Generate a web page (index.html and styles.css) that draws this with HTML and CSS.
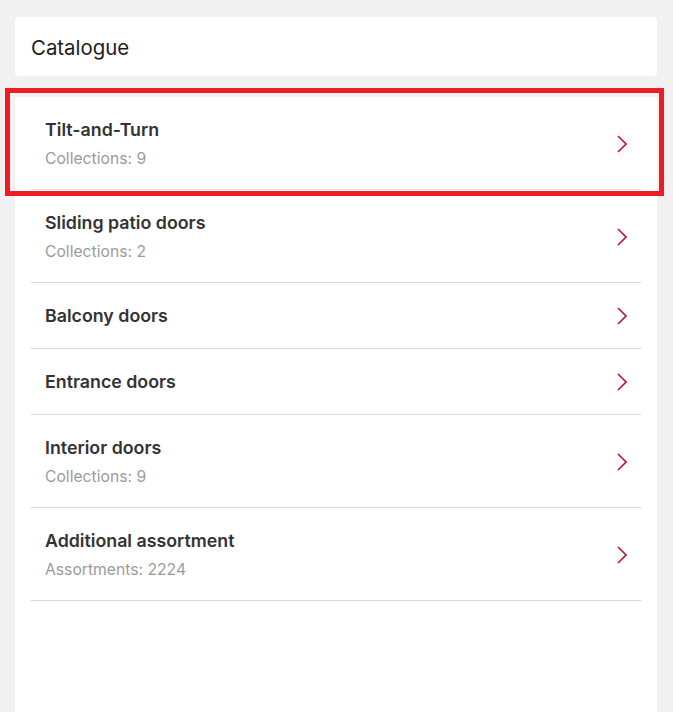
FILE: index.html
```html
<!DOCTYPE html>
<html lang="en">
<head>
    <meta charset="UTF-8">
    <meta name="viewport" content="width=device-width, initial-scale=1.0">
    <title>Catalogue</title>
    <link rel="stylesheet" href="styles.css">
</head>
<body>

    <!-- Cabeçalho -->
    <div class="cabecalho">
        <h1>Catalogue</h1>
    </div>

    <!-- Lista de categorias -->
    <div class="painel">
        <ul class="lista">
            <li class="item item_destaque">
                <div class="item_texto">
                    <span class="item_titulo">Tilt-and-Turn</span>
                    <span class="item_info">Collections: 9</span>
                </div>
                <svg class="seta" viewBox="0 0 10 18" width="10" height="18"><path d="M1 1 L9 9 L1 17" /></svg>
            </li>
            <li class="item">
                <div class="item_texto">
                    <span class="item_titulo">Sliding patio doors</span>
                    <span class="item_info">Collections: 2</span>
                </div>
                <svg class="seta" viewBox="0 0 10 18" width="10" height="18"><path d="M1 1 L9 9 L1 17" /></svg>
            </li>
            <li class="item">
                <div class="item_texto">
                    <span class="item_titulo">Balcony doors</span>
                </div>
                <svg class="seta" viewBox="0 0 10 18" width="10" height="18"><path d="M1 1 L9 9 L1 17" /></svg>
            </li>
            <li class="item">
                <div class="item_texto">
                    <span class="item_titulo">Entrance doors</span>
                </div>
                <svg class="seta" viewBox="0 0 10 18" width="10" height="18"><path d="M1 1 L9 9 L1 17" /></svg>
            </li>
            <li class="item">
                <div class="item_texto">
                    <span class="item_titulo">Interior doors</span>
                    <span class="item_info">Collections: 9</span>
                </div>
                <svg class="seta" viewBox="0 0 10 18" width="10" height="18"><path d="M1 1 L9 9 L1 17" /></svg>
            </li>
            <li class="item">
                <div class="item_texto">
                    <span class="item_titulo">Additional assortment</span>
                    <span class="item_info">Assortments: 2224</span>
                </div>
                <svg class="seta" viewBox="0 0 10 18" width="10" height="18"><path d="M1 1 L9 9 L1 17" /></svg>
            </li>
        </ul>
    </div>

</body>
</html>
```

FILE: styles.css
```css
body {
    font-family: Inter, "Noto Sans", sans-serif;
    background-color: #f1f1f1;
    margin: 0;
    padding: 17px 16px 0 15px;
    height: 712px;
    box-sizing: border-box;
    display: flex;
    flex-direction: column;
    overflow: hidden;
}
.cabecalho {
    background-color: #fff;
    border-radius: 4px;
    height: 59px;
    padding: 0 16px;
    display: flex;
    align-items: center;
}
h1 {
    margin: 0;
    padding-top: 2px;
    font-size: 20.4px;
    font-weight: 400;
    color: #1c1c1c;
}
.painel {
    margin-top: 21px;
    flex: 1;
    background-color: #fff;
    border-radius: 4px 4px 0 0;
    padding: 0 16px;
}
.lista {
    list-style: none;
    margin: 0;
    padding: 0;
}
.item {
    position: relative;
    display: flex;
    align-items: center;
    justify-content: space-between;
    padding: 21px 14px 20px 14px;
    border-bottom: 1px solid #d9d9d9;
}
.item_texto {
    display: flex;
    flex-direction: column;
}
.item_titulo {
    font-size: 17.8px;
    line-height: 24px;
    font-weight: 600;
    color: #333;
}
.item_info {
    margin-top: 7px;
    font-size: 15.7px;
    line-height: 20px;
    color: #9b9b9b;
}
.seta {
    fill: none;
    stroke: #be1730;
    stroke-width: 1.6;
}
/* Destaque vermelho sobre o primeiro item */
.item_destaque::after {
    content: "";
    position: absolute;
    left: -26px;
    top: -9px;
    right: -23px;
    bottom: -7px;
    border: 5px solid #ee1d25;
}
```
